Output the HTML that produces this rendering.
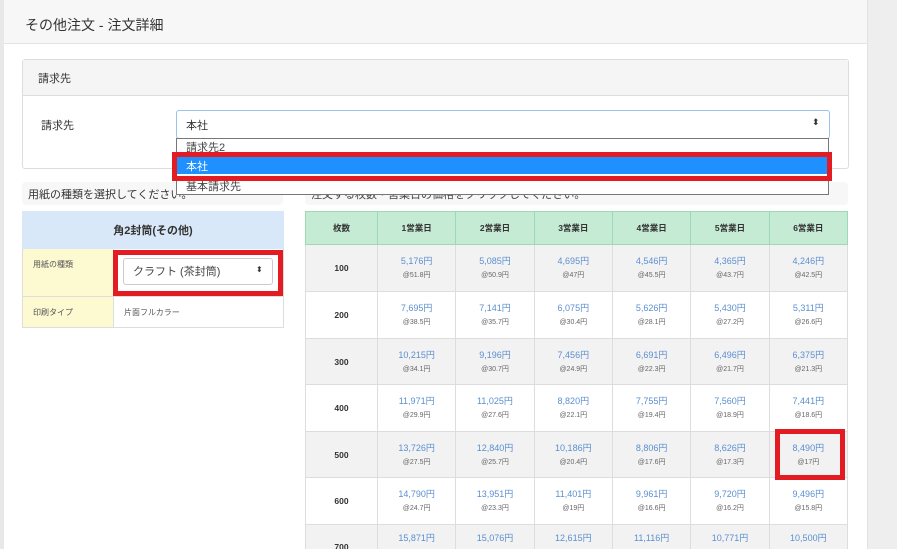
<!DOCTYPE html>
<html><head><meta charset="utf-8"><style>
*{box-sizing:border-box;margin:0;padding:0}
html,body{width:897px;height:549px;overflow:hidden}
body{background:#fff;font-family:"Liberation Sans","Noto Sans CJK JP",sans-serif;color:#333;position:relative}
.a{position:absolute}
.red{position:absolute;border:5px solid #e31b23}
table{border-collapse:collapse;table-layout:fixed;position:absolute}
td{border:1px solid #ddd;text-align:center;font-size:8px}
.p{color:#5b8fd0;font-size:9px;line-height:15px}
.u{color:#666;font-size:7px;line-height:13px}
.n{font-weight:bold;font-size:8.5px}
</style></head><body>
<div class="a" style="left:0;top:0;width:4px;height:549px;background:#e8e8e8"></div>
<div class="a" style="left:867px;top:0;width:30px;height:549px;background:#eee;border-left:1px solid #e2e2e2"></div>
<div class="a" style="left:4px;top:0;width:863px;height:44px;background:#f7f7f7;border-bottom:1px solid #e3e3e3"></div>
<div class="a" style="left:25px;top:15px;font-size:14px;color:#333">その他注文 - 注文詳細</div>

<div class="a" style="left:22px;top:59px;width:827px;height:110px;border:1px solid #ddd;border-radius:3px"></div>
<div class="a" style="left:23px;top:60px;width:825px;height:36px;background:#f5f5f5;border-bottom:1px solid #ddd"></div>
<div class="a" style="left:38px;top:70px;font-size:11px">請求先</div>
<div class="a" style="left:41px;top:117px;font-size:11px">請求先</div>

<div class="a" style="left:22px;top:182px;width:261px;height:23px;background:#f7f7f7;border-radius:4px"></div>
<div class="a" style="left:28px;top:186px;font-size:11px">用紙の種類を選択してください。</div>
<div class="a" style="left:305px;top:182px;width:543px;height:23px;background:#f7f7f7;border-radius:4px"></div>
<div class="a" style="left:311px;top:186px;font-size:11px;color:#444">注文する枚数・営業日の価格をクリックしてください。</div>

<div class="a" style="left:176px;top:110px;width:654px;height:29px;border:1px solid #9ac3ea;border-radius:3px;background:#fff"></div>
<div class="a" style="left:186px;top:117px;font-size:11px">本社</div>
<div class="a" style="left:812px;top:117px;font-size:9px">⬍</div>
<div class="a" style="left:176px;top:138px;width:653px;height:57px;border:1px solid #777;background:#fff"></div>
<div class="a" style="left:186px;top:139px;font-size:11px;color:#444">請求先2</div>
<div class="a" style="left:177px;top:157px;width:650px;height:17px;background:#1e90ff"></div>
<div class="a" style="left:186px;top:158px;font-size:11px;color:#fff">本社</div>
<div class="a" style="left:186px;top:178px;font-size:11px;color:#444">基本請求先</div>
<div class="red" style="left:172px;top:152px;width:660px;height:29px"></div>

<table style="left:22px;top:211px;width:261px">
<colgroup><col style="width:91px"><col style="width:170px"></colgroup>
<tr style="height:37px"><td colspan="2" style="background:#d9e8f8;font-weight:bold;font-size:11px;border-color:#d9e8f8">角2封筒(その他)</td></tr>
<tr style="height:48px"><td style="background:#fdf9d1;text-align:left;vertical-align:top;padding:10px 0 0 10px;font-size:8px;color:#555">用紙の種類</td><td></td></tr>
<tr style="height:31px"><td style="background:#fdf9d1;text-align:left;padding-left:10px;font-size:8px;color:#555">印刷タイプ</td><td style="text-align:left;padding-left:10px;font-size:8px;color:#555">片面フルカラー</td></tr>
</table>
<div class="a" style="left:123px;top:258px;width:150px;height:27px;border:1px solid #ccc;border-radius:3px;background:#fff"></div>
<div class="a" style="left:133px;top:263px;font-size:11px;color:#444">クラフト (茶封筒)</div>
<div class="a" style="left:256px;top:265px;font-size:8px">⬍</div>
<div class="red" style="left:113px;top:250px;width:170px;height:46px"></div>

<table style="left:305px;top:211px;width:543px">
<colgroup><col style="width:72px"><col><col><col><col><col><col></colgroup>
<tr style="height:33px;background:#c5ebd5"><td class="n" style="border-color:#9dd9b4">枚数</td><td class="n" style="border-color:#9dd9b4">1営業日</td><td class="n" style="border-color:#9dd9b4">2営業日</td><td class="n" style="border-color:#9dd9b4">3営業日</td><td class="n" style="border-color:#9dd9b4">4営業日</td><td class="n" style="border-color:#9dd9b4">5営業日</td><td class="n" style="border-color:#9dd9b4">6営業日</td></tr>
<tr style="height:47px;background:#f2f2f2"><td class="n">100</td><td><div class="p">5,176円</div><div class="u">@51.8円</div></td><td><div class="p">5,085円</div><div class="u">@50.9円</div></td><td><div class="p">4,695円</div><div class="u">@47円</div></td><td><div class="p">4,546円</div><div class="u">@45.5円</div></td><td><div class="p">4,365円</div><div class="u">@43.7円</div></td><td><div class="p">4,246円</div><div class="u">@42.5円</div></td></tr>
<tr style="height:47px"><td class="n">200</td><td><div class="p">7,695円</div><div class="u">@38.5円</div></td><td><div class="p">7,141円</div><div class="u">@35.7円</div></td><td><div class="p">6,075円</div><div class="u">@30.4円</div></td><td><div class="p">5,626円</div><div class="u">@28.1円</div></td><td><div class="p">5,430円</div><div class="u">@27.2円</div></td><td><div class="p">5,311円</div><div class="u">@26.6円</div></td></tr>
<tr style="height:46px;background:#f2f2f2"><td class="n">300</td><td><div class="p">10,215円</div><div class="u">@34.1円</div></td><td><div class="p">9,196円</div><div class="u">@30.7円</div></td><td><div class="p">7,456円</div><div class="u">@24.9円</div></td><td><div class="p">6,691円</div><div class="u">@22.3円</div></td><td><div class="p">6,496円</div><div class="u">@21.7円</div></td><td><div class="p">6,375円</div><div class="u">@21.3円</div></td></tr>
<tr style="height:47px"><td class="n">400</td><td><div class="p">11,971円</div><div class="u">@29.9円</div></td><td><div class="p">11,025円</div><div class="u">@27.6円</div></td><td><div class="p">8,820円</div><div class="u">@22.1円</div></td><td><div class="p">7,755円</div><div class="u">@19.4円</div></td><td><div class="p">7,560円</div><div class="u">@18.9円</div></td><td><div class="p">7,441円</div><div class="u">@18.6円</div></td></tr>
<tr style="height:46px;background:#f2f2f2"><td class="n">500</td><td><div class="p">13,726円</div><div class="u">@27.5円</div></td><td><div class="p">12,840円</div><div class="u">@25.7円</div></td><td><div class="p">10,186円</div><div class="u">@20.4円</div></td><td><div class="p">8,806円</div><div class="u">@17.6円</div></td><td><div class="p">8,626円</div><div class="u">@17.3円</div></td><td><div class="p">8,490円</div><div class="u">@17円</div></td></tr>
<tr style="height:47px"><td class="n">600</td><td><div class="p">14,790円</div><div class="u">@24.7円</div></td><td><div class="p">13,951円</div><div class="u">@23.3円</div></td><td><div class="p">11,401円</div><div class="u">@19円</div></td><td><div class="p">9,961円</div><div class="u">@16.6円</div></td><td><div class="p">9,720円</div><div class="u">@16.2円</div></td><td><div class="p">9,496円</div><div class="u">@15.8円</div></td></tr>
<tr style="height:47px;background:#f2f2f2"><td class="n" style="vertical-align:top;padding-top:17px">700</td><td style="vertical-align:top;padding-top:6px"><div class="p">15,871円</div></td><td style="vertical-align:top;padding-top:6px"><div class="p">15,076円</div></td><td style="vertical-align:top;padding-top:6px"><div class="p">12,615円</div></td><td style="vertical-align:top;padding-top:6px"><div class="p">11,116円</div></td><td style="vertical-align:top;padding-top:6px"><div class="p">10,771円</div></td><td style="vertical-align:top;padding-top:6px"><div class="p">10,500円</div></td></tr>
</table>
<div class="red" style="left:775px;top:429px;width:70px;height:51px"></div>
</body></html>
